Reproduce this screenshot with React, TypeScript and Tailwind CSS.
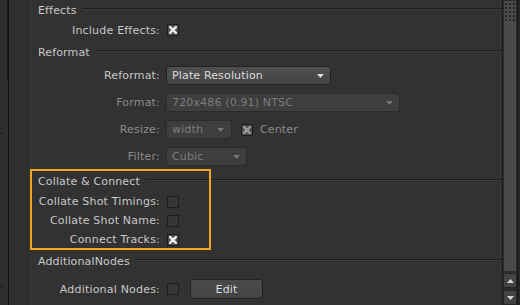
import React from "react";

const Section = ({ title, className = "" }: { title: string; className?: string }) => (
  <div className={`flex items-center pl-[10px] h-[20px] ${className}`}>
    <span className="text-[#c8c8c8] leading-[13px] tracking-[0.15px] whitespace-nowrap">{title}</span>
    <div className="flex-1 ml-[6px] mb-[3px] h-[2px] border-t border-t-[#1c1c1c] border-b border-b-[#3d3d3d]" />
  </div>
);

const Row = ({
  label,
  dim,
  className = "",
  children,
}: {
  label: string;
  dim?: boolean;
  className?: string;
  children: React.ReactNode;
}) => (
  <div className={`flex items-center ${className}`}>
    <div
      className={`w-[132px] text-right leading-[13px] tracking-[0.2px] whitespace-nowrap ${
        dim ? "text-[#8c8c8c]" : "text-[#c8c8c8]"
      }`}
    >
      {label}
    </div>
    <div className="ml-[6px] flex items-center">{children}</div>
  </div>
);

const Check = ({ checked, dim }: { checked?: boolean; dim?: boolean }) => (
  <div
    className={`ml-px w-[12px] h-[12px] border border-[#1d1d1d] flex items-center justify-center ${
      checked ? "bg-[#4c4c4c]" : "bg-[#363636]"
    }`}
  >
    {checked && (
      <svg width="8" height="8" viewBox="0 0 8 8">
        <path
          d="M1.2 1.2L6.8 6.8M6.8 1.2L1.2 6.8"
          stroke={dim ? "#9a9a9a" : "#ececec"}
          strokeWidth="2.5"
          strokeLinecap="square"
        />
      </svg>
    )}
  </div>
);

const Arrow = ({ dim }: { dim?: boolean }) => (
  <svg width="7" height="4" viewBox="0 0 7 4" className="ml-auto">
    <path d="M0 0H7L3.5 4Z" fill={dim ? "#767676" : "#dedede"} />
  </svg>
);

const Dropdown = ({
  value,
  dim,
  className = "",
}: {
  value: string;
  dim?: boolean;
  className?: string;
}) => (
  <div
    className={`h-[19px] rounded-[3px] border flex items-center pl-[5px] pr-[6px] leading-[13px] tracking-[0.15px] whitespace-nowrap overflow-hidden ${
      dim
        ? "bg-[#3e3e3e] border-[#2a2a2a] text-[#7c7c7c]"
        : "bg-gradient-to-b from-[#4e4e4e] to-[#464646] border-[#222222] text-[#dcdcdc]"
    } ${className}`}
  >
    <span>{value}</span>
    <Arrow dim={dim} />
  </div>
);

const Scrollbar = () => (
  <div className="w-[15px] border-l border-[#1c1c1c] flex flex-col bg-[#2b2b2b]">
    <div className="h-[277px] bg-[#4a4a4a] border border-[#2c2c2c]">
      <div className="grid grid-cols-3 gap-x-[2px] gap-y-[2px] w-fit mt-[2px] ml-px">
        {Array.from({ length: 15 }).map((_, i) => (
          <div key={i} className="w-[2px] h-[2px] bg-[#252525]" />
        ))}
      </div>
    </div>
    <div className="mt-px h-[15px] bg-[#434343] border border-[#262626] rounded-[2px] flex items-center justify-center">
      <svg width="7" height="4" viewBox="0 0 7 4">
        <path d="M0 4H7L3.5 0Z" fill="#d4d4d4" />
      </svg>
    </div>
    <div className="mt-[2px] h-[15px] bg-[#434343] border border-[#262626] rounded-[2px] flex items-center justify-center">
      <svg width="7" height="4" viewBox="0 0 7 4">
        <path d="M0 0H7L3.5 4Z" fill="#d4d4d4" />
      </svg>
    </div>
  </div>
);

export default function App() {
  return (
    <div className="relative w-[520px] h-[305px] overflow-hidden flex bg-[#323232] font-['DejaVu_Sans',sans-serif] text-[11px]">
      {/* neighbouring panel edge */}
      <div className="w-[8px] flex flex-col bg-[#2e2e2e]">
        <div className="h-[80px] border-r border-[#1e1e1e]" />
        <div className="h-[53px]" />
        <div className="h-px w-[3px] bg-[#1a1a1a]" />
        <div className="h-[152px]" />
        <div className="h-px w-[3px] bg-[#1a1a1a]" />
      </div>
      <div className="w-px bg-[#101010]" />
      <div className="w-[19px] border-r border-[#2a2a2a] bg-[#303030]" />

      <main className="flex-1 flex flex-col">
        <Section title="Effects" className="h-[19px]" />
        <Row label="Include Effects:" className="h-[20px]">
          <Check checked />
        </Row>

        <Section title="Reformat" className="mt-[2px]" />
        <Row label="Reformat:" className="mt-[4px]">
          <Dropdown value="Plate Resolution" className="w-[165px]" />
        </Row>
        <Row label="Format:" dim className="mt-[8px]">
          <Dropdown value="720x486 (0.91) NTSC" dim className="w-[234px]" />
        </Row>
        <Row label="Resize:" dim className="mt-[8px]">
          <Dropdown value="width" dim className="w-[66px] pr-[7px]" />
          <div className="ml-[8px]">
            <Check checked dim />
          </div>
          <span className="ml-[7px] text-[#8c8c8c] leading-[13px] tracking-[0.15px]">Center</span>
        </Row>
        <Row label="Filter:" dim className="mt-[8px]">
          <Dropdown value="Cubic" dim className="w-[81px]" />
        </Row>

        <Section title="Collate &amp; Connect" className="mt-[5px] h-[21px]" />
        <Row label="Collate Shot Timings:" className="h-[19px]">
          <Check />
        </Row>
        <Row label="Collate Shot Name:" className="h-[19px]">
          <Check />
        </Row>
        <Row label="Connect Tracks:" className="h-[19px]">
          <Check checked />
        </Row>

        <Section title="AdditionalNodes" className="mt-[2px]" />
        <Row label="Additional Nodes:" className="mt-[8px] h-[20px]">
          <Check />
          <button className="ml-[11px] w-[73px] h-[20px] rounded-[3px] border border-[#222222] bg-gradient-to-b from-[#4a4a4a] to-[#444444] text-[#dcdcdc] leading-[13px] tracking-[0.15px]">
            Edit
          </button>
        </Row>
      </main>

      <Scrollbar />
      <div className="w-[3px] bg-[#262626] border-l border-[#141414]" />

      {/* highlight annotation */}
      <div className="absolute left-[30px] top-[169px] w-[181px] h-[81px] border-2 border-[#f4a622] pointer-events-none" />
    </div>
  );
}
